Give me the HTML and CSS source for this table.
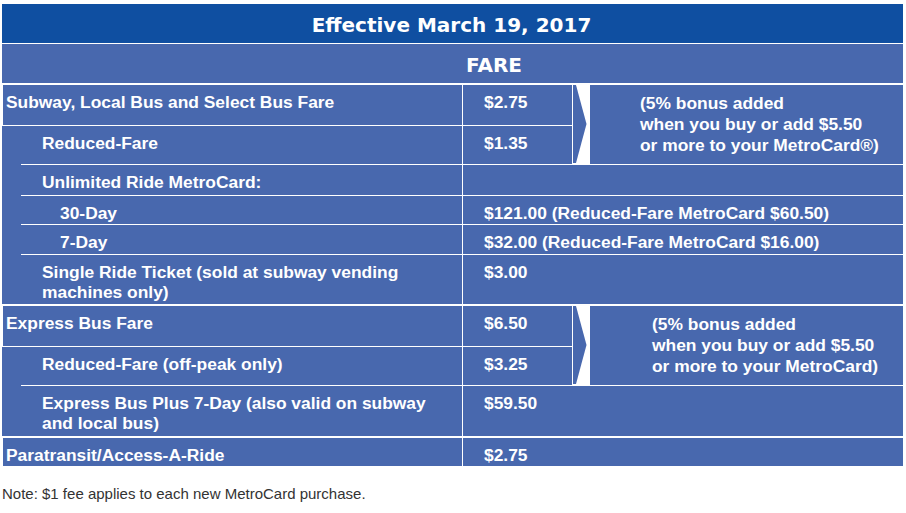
FILE: index.html
```html
<!DOCTYPE html>
<html>
<head>
<meta charset="utf-8">
<link rel="stylesheet" href="styles.css">
</head>
<body>
<div class="page">
  <div class="title">Effective March 19, 2017</div>
  <div class="fare-head">FARE</div>

  <div class="group g1">
    <div class="lbl top">Subway, Local Bus and Select Bus Fare</div>
    <div class="price bb">$2.75</div>
    <div class="arrow rows12"><svg viewBox="0 0 18 78" preserveAspectRatio="none"><polygon points="1,0 4,0 14.5,39 4,78 1,78" fill="#4868AE"/></svg></div>
    <div class="note rows12 n1">(5% bonus added<br>when you buy or add $5.50<br>or more to your MetroCard®)</div>

    <div class="lbl sub bb">Reduced-Fare</div>
    <div class="price bb">$1.35</div>

    <div class="lbl sub bb">Unlimited Ride MetroCard:</div>
    <div class="price wide bb"></div>

    <div class="lbl sub2 bb">30-Day</div>
    <div class="price wide bb">$121.00 (Reduced-Fare MetroCard $60.50)</div>

    <div class="lbl sub2 bb">7-Day</div>
    <div class="price wide bb">$32.00 (Reduced-Fare MetroCard $16.00)</div>

    <div class="lbl sub">Single Ride Ticket (sold at subway vending machines only)</div>
    <div class="price wide">$3.00</div>
  </div>

  <div class="group g2">
    <div class="lbl top">Express Bus Fare</div>
    <div class="price bb">$6.50</div>
    <div class="arrow rows12"><svg viewBox="0 0 18 78" preserveAspectRatio="none"><polygon points="1,0 4,0 14.5,39 4,78 1,78" fill="#4868AE"/></svg></div>
    <div class="note rows12 n2">(5% bonus added<br>when you buy or add $5.50<br>or more to your MetroCard)</div>

    <div class="lbl sub bb">Reduced-Fare (off-peak only)</div>
    <div class="price bb">$3.25</div>

    <div class="lbl sub">Express Bus Plus 7-Day (also valid on subway and local bus)</div>
    <div class="price wide">$59.50</div>
  </div>

  <div class="group g3">
    <div class="lbl top noline">Paratransit/Access-A-Ride</div>
    <div class="price wide">$2.75</div>
  </div>

  <p class="footnote">Note: $1 fee applies to each new MetroCard purchase.</p>
</div>
</body>
</html>
```

FILE: styles.css
```css
* { box-sizing: border-box; }
html, body { margin: 0; padding: 0; background: #fff; }
body { font-family: "Liberation Sans", Arial, sans-serif; }

.page {
  padding: 4px 3px 0 2px;
  width: 906px;
}

.title {
  height: 39px;
  background: #0F4FA1;
  color: #fff;
  font-family: "DejaVu Sans", Verdana, sans-serif;
  font-weight: bold;
  font-size: 20px;
  display: flex;
  align-items: center;
  justify-content: center;
  padding-top: 3px;
  padding-right: 2px;
  margin-bottom: 1px;
}

.fare-head {
  height: 39px;
  background: #4868AE;
  color: #fff;
  font-family: "DejaVu Sans", Verdana, sans-serif;
  font-weight: bold;
  font-size: 20px;
  display: flex;
  align-items: center;
  justify-content: center;
  padding-top: 3px;
  padding-left: 83px;
  margin-bottom: 2px;
}

.group {
  display: grid;
  grid-template-columns: 460px 110px 18px 313px;
  background: #4868AE;
  color: #fff;
  font-weight: bold;
  font-size: 17.4px;
  line-height: 20px;
  margin-bottom: 2px;
}

.g1 { grid-template-rows: 41px 39px 31px 29px 30px 49px; }
.g2 { grid-template-rows: 41px 39px 50px; }
.g3 { grid-template-rows: 28px; }

.lbl {
  grid-column: 1;
  padding-top: 7px;
  border-bottom: 1px solid transparent;
}
.lbl.top {
  border-left: 1px solid #fff;
  border-bottom: 1px solid #fff;
  padding-left: 3px;
}
.lbl.top.noline { border-bottom: 0; }
.lbl.sub { margin-left: 19px; padding-left: 21px; padding-right: 20px; }
.lbl.sub2 { margin-left: 19px; padding-left: 39px; }
.bb { border-bottom: 1px solid #fff !important; }

.price {
  grid-column: 2;
  border-left: 1px solid #fff;
  padding-top: 7px;
  padding-left: 21px;
  white-space: nowrap;
}
.price.wide { grid-column: 2 / 5; }

.rows12 { grid-row: 1 / 3; }

.arrow {
  grid-column: 3;
  background: #fff;
  display: flex;
}
.arrow svg {
  width: 18px;
  height: 78px;
  display: block;
}

.note {
  grid-column: 4;
  border-bottom: 1px solid #fff;
  line-height: 21px;
  padding-top: 8px;
}
.n1 { padding-left: 50px; }
.n2 { padding-left: 62px; }

.footnote {
  margin: 19px 0 0 0;
  font-size: 15px;
  line-height: 17px;
  color: #333;
}
```
